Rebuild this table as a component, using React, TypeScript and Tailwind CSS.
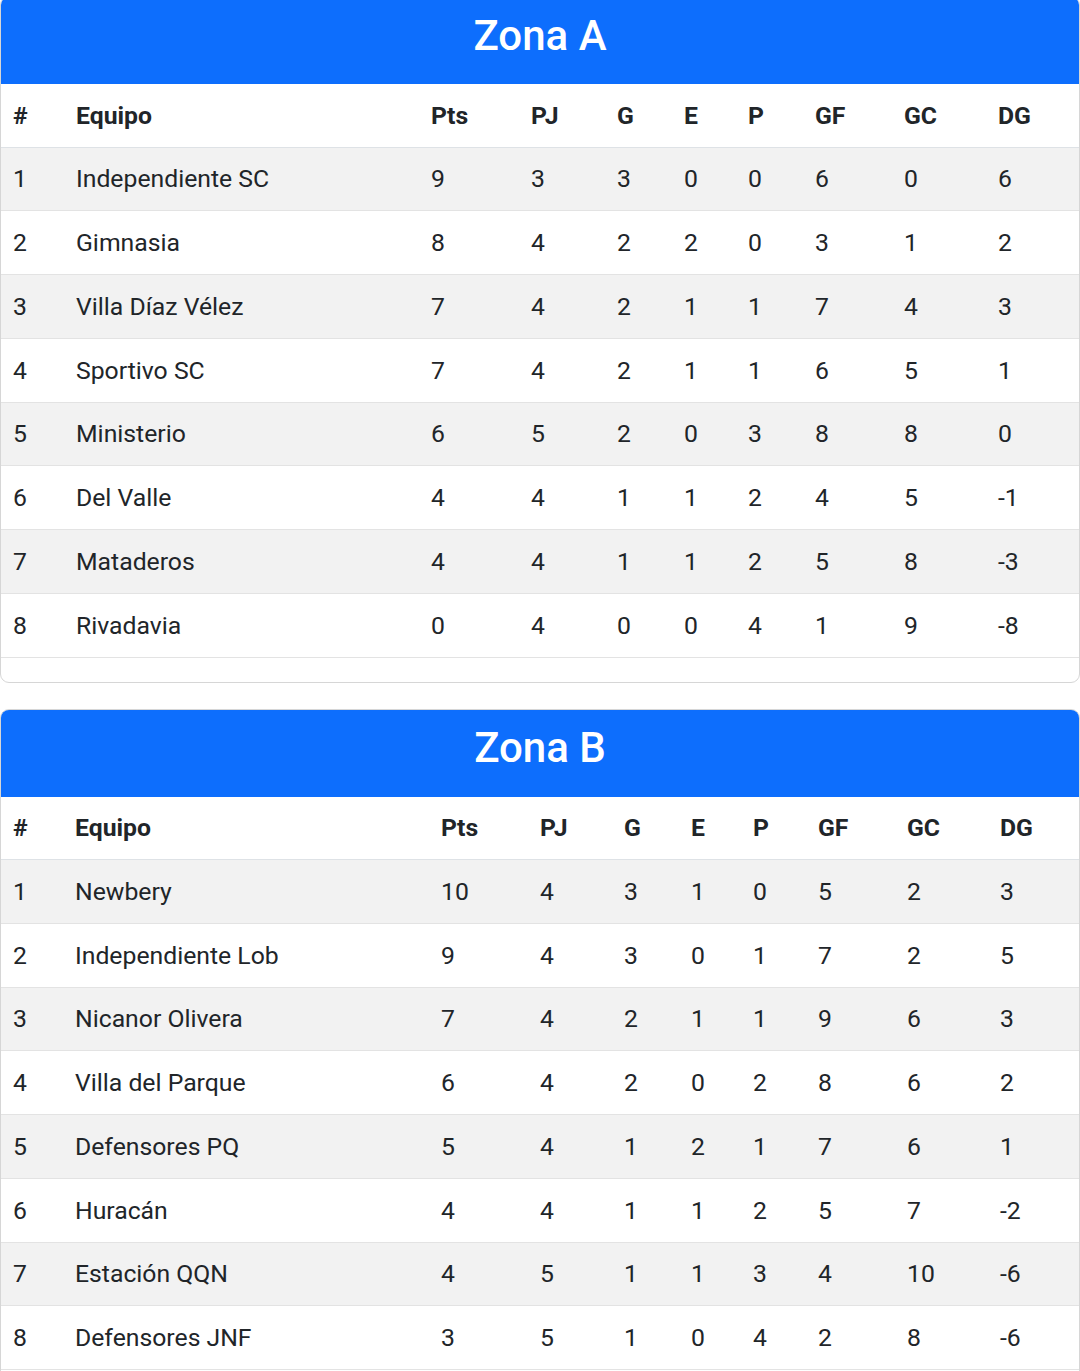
const zonaA = [
  ["1", "Independiente SC", "9", "3", "3", "0", "0", "6", "0", "6"],
  ["2", "Gimnasia", "8", "4", "2", "2", "0", "3", "1", "2"],
  ["3", "Villa Díaz Vélez", "7", "4", "2", "1", "1", "7", "4", "3"],
  ["4", "Sportivo SC", "7", "4", "2", "1", "1", "6", "5", "1"],
  ["5", "Ministerio", "6", "5", "2", "0", "3", "8", "8", "0"],
  ["6", "Del Valle", "4", "4", "1", "1", "2", "4", "5", "-1"],
  ["7", "Mataderos", "4", "4", "1", "1", "2", "5", "8", "-3"],
  ["8", "Rivadavia", "0", "4", "0", "0", "4", "1", "9", "-8"],
];

const zonaB = [
  ["1", "Newbery", "10", "4", "3", "1", "0", "5", "2", "3"],
  ["2", "Independiente Lob", "9", "4", "3", "0", "1", "7", "2", "5"],
  ["3", "Nicanor Olivera", "7", "4", "2", "1", "1", "9", "6", "3"],
  ["4", "Villa del Parque", "6", "4", "2", "0", "2", "8", "6", "2"],
  ["5", "Defensores PQ", "5", "4", "1", "2", "1", "7", "6", "1"],
  ["6", "Huracán", "4", "4", "1", "1", "2", "5", "7", "-2"],
  ["7", "Estación QQN", "4", "5", "1", "1", "3", "4", "10", "-6"],
  ["8", "Defensores JNF", "3", "5", "1", "0", "4", "2", "8", "-6"],
];

const headers = ["#", "Equipo", "Pts", "PJ", "G", "E", "P", "GF", "GC", "DG"];

function Zona({ title, rows, cols }: { title: string; rows: string[][]; cols: string[] }) {
  return (
    <div className="w-full border border-[#d6d6d6] rounded-[9px] overflow-hidden bg-white">
      {/* card header */}
      <div className="h-[87px] pb-[10px] bg-[#0d6efd] flex items-center justify-center">
        <h3 className="text-white text-[42px] font-medium leading-none">{title}</h3>
      </div>
      <div className="pb-6">
        <table className="w-full table-fixed border-collapse text-[24.75px] text-[#212529]">
          <colgroup>
            {cols.map((c, i) => (
              <col key={i} className={c} />
            ))}
          </colgroup>
          <thead>
            <tr className="h-[63px] border-b border-[#dee2e6]">
              {headers.map((h) => (
                <th key={h} className="px-3 text-left font-bold align-middle">
                  {h}
                </th>
              ))}
            </tr>
          </thead>
          <tbody>
            {rows.map((r, i) => (
              <tr
                key={i}
                className={`h-[63.75px] border-b border-[#e3e3e3] ${i % 2 === 0 ? "bg-[#f2f2f2]" : "bg-white"}`}
              >
                {r.map((v, j) => (
                  <td key={j} className="px-3 align-middle whitespace-nowrap">
                    {v}
                  </td>
                ))}
              </tr>
            ))}
          </tbody>
        </table>
      </div>
    </div>
  );
}

export default function App() {
  return (
    <div className="w-[1080px] h-[1371px] overflow-hidden bg-white font-['Roboto',sans-serif]">
      <div className="-mt-1 flex flex-col gap-[26px]">
        <Zona
          title="Zona A"
          rows={zonaA}
          cols={["w-[63px]", "w-[355px]", "w-[100px]", "w-[86px]", "w-[67px]", "w-[64px]", "w-[67px]", "w-[89px]", "w-[94px]", "w-[93px]"]}
        />
        <Zona
          title="Zona B"
          rows={zonaB}
          cols={["w-[62px]", "w-[366px]", "w-[99px]", "w-[84px]", "w-[67px]", "w-[62px]", "w-[65px]", "w-[89px]", "w-[93px]", "w-[91px]"]}
        />
      </div>
    </div>
  );
}
